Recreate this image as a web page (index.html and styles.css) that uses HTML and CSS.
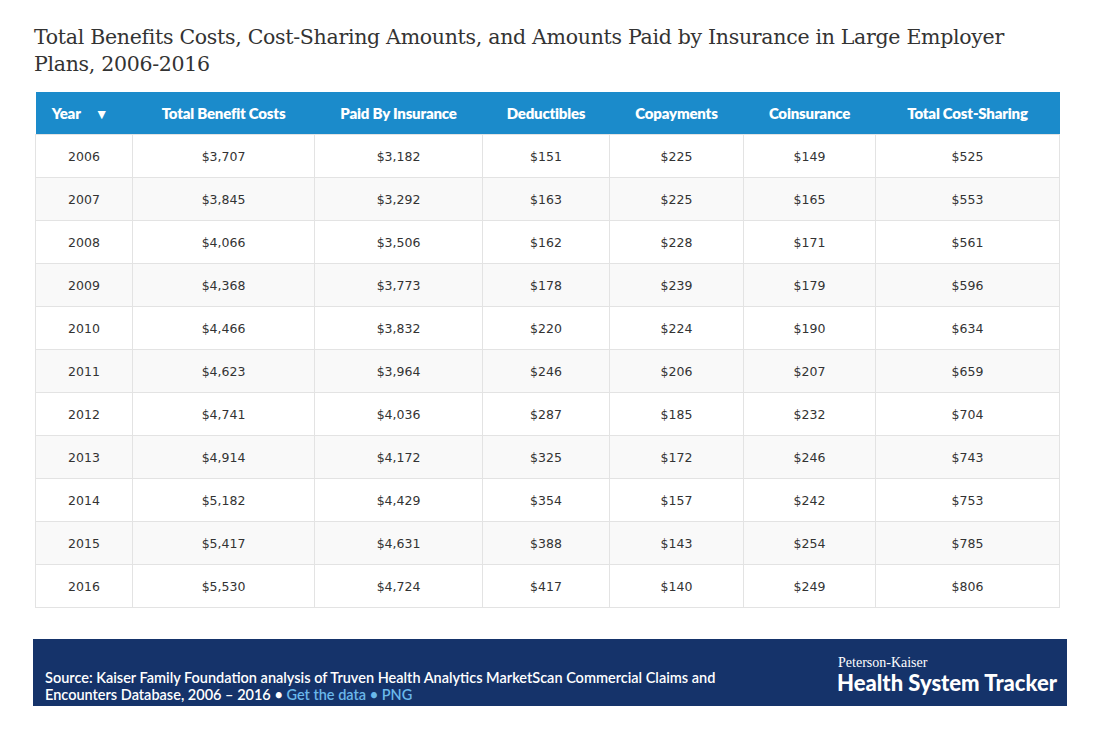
FILE: index.html
```html
<!DOCTYPE html>
<html>
<head>
<meta charset="utf-8">
<link rel="stylesheet" href="styles.css">
</head>
<body>
<div class="page">
  <h1 class="title">Total Benefits Costs, Cost-Sharing Amounts, and Amounts Paid by Insurance in Large Employer Plans, 2006-2016</h1>
  <table class="data">
    <colgroup>
      <col class="c1"><col class="c2"><col class="c3"><col class="c4"><col class="c5"><col class="c6"><col class="c7">
    </colgroup>
    <thead>
      <tr>
        <th><span class="year">Year<span class="arrow">▼</span></span></th>
        <th>Total Benefit Costs</th>
        <th>Paid By Insurance</th>
        <th>Deductibles</th>
        <th>Copayments</th>
        <th>Coinsurance</th>
        <th>Total Cost-Sharing</th>
      </tr>
    </thead>
    <tbody>
      <tr><td>2006</td><td>$3,707</td><td>$3,182</td><td>$151</td><td>$225</td><td>$149</td><td>$525</td></tr>
      <tr><td>2007</td><td>$3,845</td><td>$3,292</td><td>$163</td><td>$225</td><td>$165</td><td>$553</td></tr>
      <tr><td>2008</td><td>$4,066</td><td>$3,506</td><td>$162</td><td>$228</td><td>$171</td><td>$561</td></tr>
      <tr><td>2009</td><td>$4,368</td><td>$3,773</td><td>$178</td><td>$239</td><td>$179</td><td>$596</td></tr>
      <tr><td>2010</td><td>$4,466</td><td>$3,832</td><td>$220</td><td>$224</td><td>$190</td><td>$634</td></tr>
      <tr><td>2011</td><td>$4,623</td><td>$3,964</td><td>$246</td><td>$206</td><td>$207</td><td>$659</td></tr>
      <tr><td>2012</td><td>$4,741</td><td>$4,036</td><td>$287</td><td>$185</td><td>$232</td><td>$704</td></tr>
      <tr><td>2013</td><td>$4,914</td><td>$4,172</td><td>$325</td><td>$172</td><td>$246</td><td>$743</td></tr>
      <tr><td>2014</td><td>$5,182</td><td>$4,429</td><td>$354</td><td>$157</td><td>$242</td><td>$753</td></tr>
      <tr><td>2015</td><td>$5,417</td><td>$4,631</td><td>$388</td><td>$143</td><td>$254</td><td>$785</td></tr>
      <tr><td>2016</td><td>$5,530</td><td>$4,724</td><td>$417</td><td>$140</td><td>$249</td><td>$806</td></tr>
    </tbody>
  </table>
  <footer class="foot">
    <p class="source">Source: Kaiser Family Foundation analysis of Truven Health Analytics MarketScan Commercial Claims and Encounters Database, 2006 – 2016 • <a class="link" href="#">Get the data • PNG</a></p>
    <div class="logo">
      <div class="logo-top">Peterson-Kaiser</div>
      <div class="logo-main">Health System Tracker</div>
    </div>
  </footer>
</div>
</body>
</html>
```
FILE: styles.css
```css
html, body {
  margin: 0;
  padding: 0;
  background: #ffffff;
}
.page {
  padding: 24px 34px 0 33px;
  width: 1034px;
}
.title {
  margin: 0 0 14px 1px;
  font-family: "DejaVu Serif", "Liberation Serif", serif;
  font-weight: normal;
  font-size: 20.5px;
  line-height: 27px;
  color: #333333;
  width: 1000px;
  letter-spacing: -0.3px;
}
.data {
  margin-left: 2px;
  width: 1024px;
  border-collapse: collapse;
  table-layout: fixed;
}
.c1 { width: 97px; }
.c2 { width: 182px; }
.c3 { width: 168px; }
.c4 { width: 127px; }
.c5 { width: 134px; }
.c6 { width: 132px; }
.c7 { width: 184px; }
.data th {
  background: #1b8bcb;
  color: #ffffff;
  font-family: Lato, "Liberation Sans", sans-serif;
  font-weight: 800;
  font-size: 15px;
  height: 42px;
  padding: 0;
  text-align: center;
  letter-spacing: -0.2px;
}
.year { display: inline-flex; align-items: center; margin-left: -8px; }
.arrow { margin-left: 14px; font-size: 14px; }
.data td {
  height: 42px;
  padding: 0;
  border: 1px solid #e3e3e3;
  text-align: center;
  font-family: "DejaVu Sans", Verdana, sans-serif;
  font-size: 12.5px;
  color: #333333;
}
.data tbody tr:nth-child(even) td { background: #f9f9f9; }
.foot {
  margin-top: 31px;
  background: #15336a;
  height: 67px;
  display: flex;
  align-items: flex-end;
  justify-content: space-between;
  padding: 0 10px 3px 12px;
  box-sizing: border-box;
}
.source {
  margin: 0;
  width: 690px;
  font-family: Lato, "Liberation Sans", sans-serif;
  font-weight: 600;
  font-size: 14.5px;
  line-height: 17px;
  color: #ffffff;
}
.link { color: #6ab8ea; text-decoration: none; }
.logo {
  align-self: center;
  margin-top: 8px;
  color: #ffffff;
}
.logo-top {
  font-family: "Liberation Serif", serif;
  font-size: 14px;
  line-height: 16px;
  margin-left: 1px;
}
.logo-main {
  font-family: Lato, "Liberation Sans", sans-serif;
  font-weight: 900;
  font-size: 22px;
  line-height: 24px;
}
```
